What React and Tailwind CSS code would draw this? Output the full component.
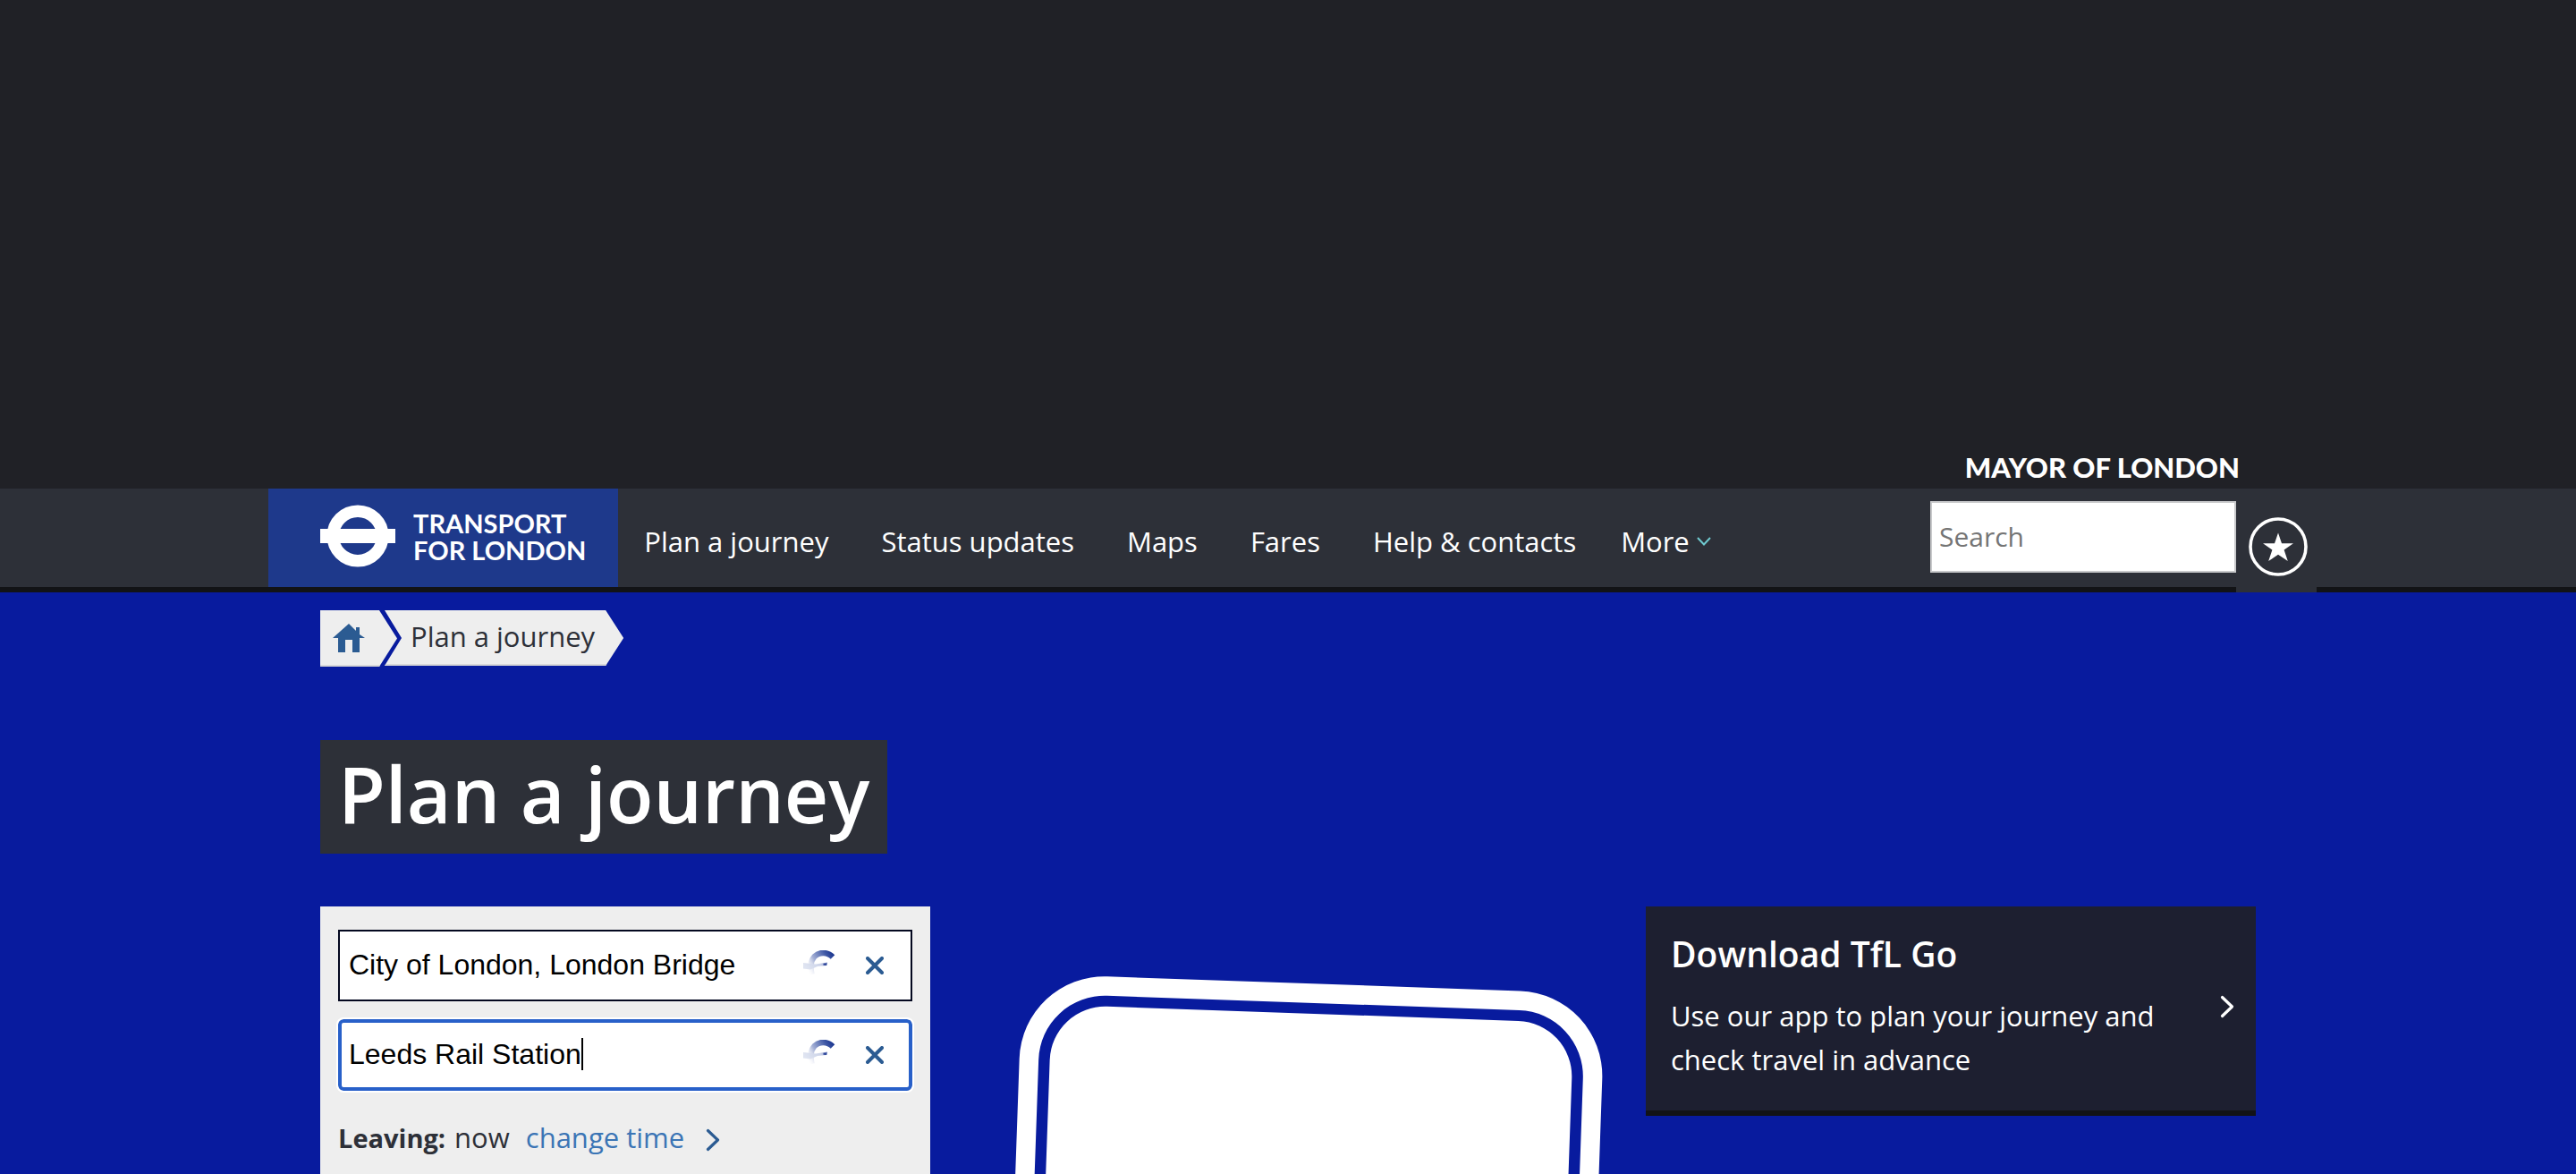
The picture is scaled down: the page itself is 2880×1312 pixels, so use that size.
import React from "react";

const sans = "font-['Open_Sans','Noto_Sans',sans-serif]";
const caps = "font-['Lato','Open_Sans',sans-serif]";

const links = ["Plan a journey", "Status updates", "Maps", "Fares", "Help & contacts"];

function Chevron({ className }) {
  return (
    <svg className={className} viewBox="0 0 16 26" fill="none" stroke="currentColor" strokeWidth="3.2" strokeLinecap="round" strokeLinejoin="round" aria-hidden="true">
      <path d="M2.5 2.5 13.5 13 2.5 23.5" />
    </svg>
  );
}

function Roundel() {
  return (
    <svg className="mt-[18px] h-[70px] w-[84px] shrink-0" viewBox="0 0 84 70" aria-hidden="true">
      <circle cx="42" cy="35" r="27.75" fill="none" stroke="#fff" strokeWidth="13.5" />
      <rect x="0" y="27" width="84" height="16" fill="#fff" />
    </svg>
  );
}

function Spinner({ id }) {
  return (
    <svg className="mb-1.5 h-7 w-9" viewBox="0 0 36 28" aria-hidden="true">
      <defs>
        <linearGradient id={id + "a"} gradientUnits="userSpaceOnUse" x1="35" y1="7" x2="5" y2="25">
          <stop offset="0" stopColor="#1c3790" />
          <stop offset="0.2" stopColor="#4059a6" />
          <stop offset="0.6" stopColor="#a3afd5" />
          <stop offset="1" stopColor="#fff" stopOpacity="0" />
        </linearGradient>
        <linearGradient id={id + "b"} x1="1" y1="0" x2="0" y2="0.2">
          <stop offset="0" stopColor="#8b9aca" />
          <stop offset="0.35" stopColor="#cdd4e9" />
          <stop offset="1" stopColor="#dfe4f1" />
        </linearGradient>
      </defs>
      <path d="M33 7.5C27 1.5 18 1.5 12.5 7Q9 11 8.5 17 8.5 22 9.5 27" fill="none" stroke={"url(#" + id + "a)"} strokeWidth="6.4" />
      <path d="M0 14 14 15.5 27 13.5 26.5 17 16 18 8 21.5 0 20.5Z" fill={"url(#" + id + "b)"} />
      <path d="M22.5 14.8 26.5 14.3 26 17 22.5 16.8Z" fill="#31499c" />
    </svg>
  );
}

function StationField({ id, label, value, focused }) {
  return (
    <div className="relative">
      <input
        id={id}
        type="text"
        aria-label={label}
        defaultValue={value}
        className={
          focused
            ? "block h-20 w-full rounded-md border-4 border-[#2860c9] bg-white pr-32 pb-0.5 pl-2 font-['Liberation_Sans',Arial,sans-serif] text-[32px] text-black outline-2 outline-white"
            : "block h-20 w-full border-2 border-[#04081f] bg-white pr-32 pb-0.5 pl-2.5 font-['Liberation_Sans',Arial,sans-serif] text-[32px] text-black outline-none"
        }
      />
      {focused && <span className="absolute top-[21px] left-[272px] h-9 w-0.5 bg-black" />}
      <div className="absolute inset-y-0 right-8 flex items-center gap-[34px]">
        <Spinner id={id} />
        <button type="button" aria-label={"Clear " + label} className="text-[#2b5b92]">
          <svg className="size-5" viewBox="0 0 20 20" fill="none" stroke="currentColor" strokeWidth="4" strokeLinecap="round" aria-hidden="true">
            <path d="m2 2 16 16M18 2 2 18" />
          </svg>
        </button>
      </div>
    </div>
  );
}

function Phone() {
  return (
    <svg className="h-[299px] w-[700px] max-w-none" viewBox="0 0 700 299" aria-hidden="true">
      <g transform="translate(44 75) rotate(2)">
        <rect width="652" height="900" rx="95" fill="#fff" />
        <rect x="21.5" y="21.5" width="609" height="857" rx="74" fill="#081b9e" />
        <rect x="34" y="33.5" width="584" height="833" rx="62" fill="#fff" />
      </g>
    </svg>
  );
}

export default function App() {
  return (
    <div className={"flex min-h-screen flex-col overflow-x-clip bg-[#202126] text-[31px] text-white " + sans}>
      <header>
        <div className="mx-auto flex h-[546px] max-w-[2162px] items-end justify-end pr-[17px] pb-1.5">
          <a href="#mayor" className={"text-[31px] leading-9 font-black " + caps}>MAYOR OF LONDON</a>
        </div>
        <div className="border-b-6 border-[#121316] bg-[#2d3038]">
          <div className="mx-auto flex h-[110px] max-w-[2162px]">
            <a href="#home" className="-ml-[59px] flex gap-5 bg-[#1e398b] pr-9 pl-[58px]">
              <Roundel />
              <span className={"mt-6 text-[29px] leading-[30px] font-bold whitespace-nowrap " + caps}>
                TRANSPORT<br />FOR LONDON
              </span>
            </a>
            <nav aria-label="Main" className="flex flex-1 items-center pt-2 pl-[29px] whitespace-nowrap">
              <div className="flex gap-[59px]">
                {links.map((l) => <a key={l} href="#nav">{l}</a>)}
              </div>
              <button type="button" className="ml-[50px] flex items-center gap-2">
                More
                <svg className="h-2.5 w-4" viewBox="0 0 16 10" fill="none" stroke="#6fc9cf" strokeWidth="2" aria-hidden="true">
                  <path d="m1 1 7 7.5L15 1" />
                </svg>
              </button>
            </nav>
            <form className="mt-3.5" onSubmit={(e) => e.preventDefault()}>
              <input type="search" aria-label="Search" placeholder="Search" className="block h-20 w-[342px] border-2 border-[#c8c9cb] bg-white px-2 pb-0.5 text-[30px] text-black placeholder:text-[#757575]" />
            </form>
            <button type="button" aria-label="Favourites" className="-mr-[69px] flex h-[116px] w-[90px] items-start bg-[#2d3038] pt-8 pl-3.5">
              <svg className="size-[66px]" viewBox="0 0 66 66" aria-hidden="true">
                <circle cx="33" cy="33" r="31" fill="none" stroke="#fff" strokeWidth="3.6" />
                <path d="M33 17.5 37 29.3H50L39.6 36.5 43.8 49 33 41.8 22.2 49 26.4 36.5 16 29.3H29Z" fill="#fff" />
              </svg>
            </button>
          </div>
        </div>
      </header>

      <main className="flex flex-1 flex-col bg-[#081b9e]">
        <div className="mx-auto flex w-full max-w-[2164px] flex-1 flex-col pt-5">
          <nav aria-label="Breadcrumb" className="flex text-[#2d3038]">
            <a href="#home" aria-label="Home" className="flex h-[63px] w-[86px] items-center border-b-2 border-[#d8d8d8] bg-[#eee] pl-3.5 [clip-path:polygon(0_0,66px_0,100%_50%,66px_100%,0_100%)]">
              <svg className="h-8 w-9" viewBox="0 0 36 32" fill="#2b5b92" aria-hidden="true">
                <path d="M18 0 26 8V4H30V12L36 16H30V32H22V18H14V32H6V16H0Z" />
              </svg>
            </a>
            <a href="#plan" className="-ml-3.5 h-[62px] border-b-2 border-[#d8d8d8] bg-[#eee] pr-8 pl-[29px] leading-[58px] [clip-path:polygon(0_0,calc(100%-20px)_0,100%_50%,calc(100%-20px)_100%,0_100%,19px_50%)]">
              Plan a journey
            </a>
          </nav>

          <h1 className="mt-[82px] self-start bg-[#2d3038] px-5 pt-3 pb-[19px] text-[86px] leading-[96px] font-semibold">Plan a journey</h1>

          <div className="mt-[59px] grid flex-1 grid-cols-3 gap-[59px]">
            <form className="bg-[#eee] px-5 pt-[26px] text-[#2d3038]" onSubmit={(e) => e.preventDefault()}>
              <div className="flex flex-col gap-5">
                <StationField id="from" label="From" value="City of London, London Bridge" />
                <StationField id="to" label="To" value="Leeds Rail Station" focused />
              </div>
              <div className="mt-8 flex items-baseline leading-10">
                <strong className="text-[29px] font-bold">Leaving:</strong>
                <span className="ml-2.5">now</span>
                <a href="#time" className="ml-[18px] flex items-center gap-6 text-[#3b75b5]">
                  change time
                  <Chevron className="mt-1.5 h-[26px] w-4 text-[#2b5b92]" />
                </a>
              </div>
            </form>

            <Phone />

            <a href="#tflgo" className="flex items-center self-start border-b-6 border-[#121316] bg-[#1d1f30] pt-7 pr-6 pb-8 pl-7">
              <div className="flex-1">
                <h2 className="text-[39px] leading-[50px] font-semibold">Download TfL Go</h2>
                <p className="mt-5 max-w-[560px] leading-[49px]">Use our app to plan your journey and check travel in advance</p>
              </div>
              <Chevron className="h-[26px] w-4" />
            </a>
          </div>
        </div>
      </main>
    </div>
  );
}
